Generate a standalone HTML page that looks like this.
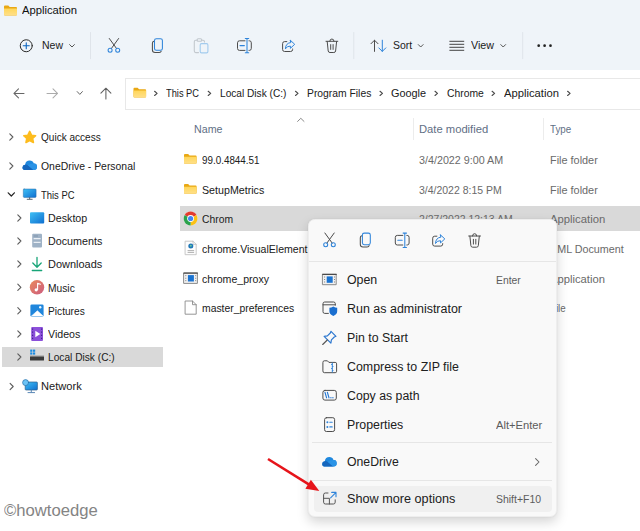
<!DOCTYPE html>
<html><head><meta charset="utf-8"><title>Application</title>
<style>
*{box-sizing:border-box;margin:0;padding:0}
html,body{width:640px;height:531px;overflow:hidden;background:#fff}
body{font-family:"Liberation Sans",sans-serif;position:relative}
.abs{position:absolute}
.t{position:absolute;white-space:nowrap;line-height:20px;height:20px;transform-origin:0 50%}
#top{left:0;top:0;width:640px;height:69.5px;background:#eff4f9}
#addr{left:125px;top:77.5px;width:520px;height:32px;border:1px solid #e8e8e8;background:#fff}
#sel{left:180px;top:206px;width:460px;height:25px;background:#d9d9d9}
#navsel{left:2px;top:347px;width:161px;height:19.5px;background:#d9d9d9}
.csep{position:absolute;top:117.5px;width:1px;height:22.5px;background:#ececec}
#menu{left:308px;top:218.5px;width:249.2px;height:298px;background:#f9f9f9;border:1px solid #eeeeee;border-radius:6.5px;box-shadow:0 5px 12px rgba(0,0,0,.17),0 0 2px rgba(0,0,0,.07)}
.msep{position:absolute;height:1px;background:#e6e6e6}
#hl{left:313.6px;top:486.3px;width:238.4px;height:25.5px;background:#f0f0f0;border-radius:4px}
</style></head><body>
<div id="top" class="abs"></div>
<div id="addr" class="abs"></div>
<div id="navsel" class="abs"></div>
<div id="sel" class="abs"></div>
<div class="csep" style="left:413px"></div><div class="csep" style="left:543px"></div>
<svg class="abs" style="left:0;top:0" width="640" height="531" viewBox="0 0 640 531" fill="none" stroke-linecap="round" stroke-linejoin="round">
<defs>
<linearGradient id="gfold" x1="0" y1="0" x2="0" y2="1"><stop offset="0" stop-color="#ffd659"/><stop offset="1" stop-color="#ffe08a"/></linearGradient>
<symbol id="fold" viewBox="0 0 13 10" overflow="visible">
 <path d="M0 1a1 1 0 0 1 1-1h3.3l1.4 1.5H12a1 1 0 0 1 1 1V9a1 1 0 0 1-1 1H1a1 1 0 0 1-1-1z" fill="#e9a814"/>
 <path d="M0 2.9h13V9a1 1 0 0 1-1 1H1a1 1 0 0 1-1-1z" fill="url(#gfold)"/>
</symbol>
<linearGradient id="gblue" x1="0" y1="0" x2="1" y2="1"><stop offset="0" stop-color="#3fc0f5"/><stop offset="1" stop-color="#0f6fd0"/></linearGradient>
<linearGradient id="gmus" x1="0" y1="0" x2="1" y2="1"><stop offset="0" stop-color="#ea8a5c"/><stop offset="1" stop-color="#cc5c80"/></linearGradient>
<g id="scis">
 <path d="M109.3 38.5L116.6 48.6M118.6 38.5L111.3 48.6" stroke="#4a4a4a" stroke-width="1"/>
 <circle cx="110.1" cy="50.2" r="2" stroke="#2f84da" stroke-width="1.05"/><circle cx="117.7" cy="50.2" r="2" stroke="#2f84da" stroke-width="1.05"/>
</g>
<g id="copy">
 <path d="M154 41.3Q152.4 41.5 152.4 43.3V49.8Q152.4 52.5 155.1 52.5H159.2Q160.9 52.5 161.2 51.2" stroke="#4d4d4d" stroke-width="1.05"/>
 <rect x="154.5" y="38.7" width="7.9" height="11.6" rx="1.9" stroke="#2f84da" stroke-width="1.05"/>
</g>
<g id="ren">
 <path d="M245 40.8H239.5Q237.5 40.8 237.5 42.8V48.4Q237.5 50.4 239.5 50.4H245M249 40.8H249.4Q251.3 40.8 251.3 42.8V48.4Q251.3 50.4 249.4 50.4H249" stroke="#4d4d4d" stroke-width="1"/>
 <path d="M245.3 38.5H248.7M245.3 52.8H248.7M247 38.5V52.8M240 45.6H244.4" stroke="#2f84da" stroke-width="1.05"/>
</g>
<g id="share">
 <path d="M286.8 41.6H284.6Q282.6 41.6 282.6 43.6V49.5Q282.6 51.5 284.6 51.5H290.6Q292.6 51.5 292.6 49.5V49" stroke="#4d4d4d" stroke-width="1"/>
 <path d="M290.4 40.3L294.7 44.3L290.4 48.3V46.1Q287 45.9 285.4 48.9Q285.6 43.2 290.4 42.6Z" stroke="#2f84da" stroke-width="1"/>
</g>
<g id="del" stroke="#4d4d4d" stroke-width="1">
 <path d="M326 41.3H337.8M329.8 41.3Q329.8 39 331.9 39Q334 39 334 41.3"/>
 <path d="M327.2 41.5L328.2 51Q328.4 52.5 330 52.5H333.8Q335.4 52.5 335.6 51L336.6 41.5"/>
 <path d="M330.7 44.6V49.4M333.1 44.6V49.4"/>
</g>
<g id="appico">
 <rect x="0.5" y="0.5" width="13.4" height="10.4" fill="#f1f1f1" stroke="#8a8a8a" stroke-width="1"/>
 <path d="M0 0.6H14.4" stroke="#4a4a4a" stroke-width="1.2" stroke-linecap="butt"/>
 <rect x="4.4" y="2.6" width="6" height="6.4" fill="#1a73d1" stroke="none"/>
 <path d="M2.3 2.8V3.6M2.3 5.3V6.1M2.3 7.8V8.6M12.2 2.8V3.6M12.2 5.3V6.1M12.2 7.8V8.6" stroke="#666" stroke-width="1" stroke-linecap="butt"/>
</g>
<g id="cloud" stroke="none">
 <path d="M3.2 9.5Q0 9.5 0 6.8Q0 4.4 2.6 4.1Q3.2 0 7.2 0Q10.2 0 11.3 2.8Q14.5 2.6 14.5 6.2Q14.5 9.5 11.3 9.5Z" fill="#1f88de"/>
 <path d="M3.2 9.5Q0 9.5 0 6.8Q0 4.4 2.6 4.1Q4 3.6 5.4 4.6L11 9.5Z" fill="#1566bd"/>
 <path d="M5.4 4.6Q7.5 2.6 11.3 2.8Q14.5 2.6 14.5 6.2Q14.5 9.5 11.3 9.5H11Z" fill="#2a93e6"/>
</g>
</defs>
<!-- title folder -->
<use href="#fold" x="4" y="5.5" width="13" height="10"/>
<!-- New -->
<circle cx="26.25" cy="45.75" r="6" stroke="#2b2b2b" stroke-width="1"/>
<path d="M23.2 45.75H29.3M26.25 42.7V48.8" stroke="#0a64c0" stroke-width="1.1"/>
<path d="M69.6 44.6L72 47L74.4 44.6" stroke="#555" stroke-width="1"/>
<path d="M90.5 32.5V58.7M353.8 32.5V58.7M522.7 32.5V58.7" stroke="#dfe4ea" stroke-width="1"/>
<use href="#scis"/><use href="#copy"/>
<!-- paste disabled -->
<g stroke="#c2c8ce" stroke-width="1.1"><path d="M197 40.2H195.8Q194.3 40.2 194.3 41.7V51Q194.3 52.6 195.8 52.6H198.5M201.8 40.2H203Q204.5 40.2 204.5 41.7V42"/><rect x="197.1" y="38.7" width="4.6" height="2.6" rx="1"/></g>
<rect x="200.2" y="43.6" width="7.7" height="9.3" rx="1.3" stroke="#a3cbee" stroke-width="1.1"/>
<use href="#ren"/><use href="#share"/><use href="#del"/>
<!-- sort -->
<path d="M374.5 40.2V51.4M371 43.7L374.5 40.2L378 43.7" stroke="#4d4d4d" stroke-width="1"/>
<path d="M382.3 40.2V51.4M378.8 47.9L382.3 51.4L385.8 47.9" stroke="#2f84da" stroke-width="1"/>
<path d="M418.3 44.6L420.7 47L423.1 44.6M500.8 44.6L503.2 47L505.6 44.6" stroke="#555" stroke-width="1"/>
<path d="M449.4 41.3H464.2M449.4 44.3H464.2M449.4 47.3H464.2M449.4 50.3H464.2" stroke="#444" stroke-width="1" stroke-linecap="butt"/>
<g fill="#222" stroke="none"><circle cx="538.7" cy="45.7" r="1.35"/><circle cx="544.6" cy="45.7" r="1.35"/><circle cx="550.5" cy="45.7" r="1.35"/></g>
<!-- nav arrows -->
<path d="M14 93.4H24M18.5 88.9L14 93.4L18.5 97.9" stroke="#666" stroke-width="1.05"/>
<path d="M47 93.4H57.5M53 88.9L57.5 93.4L53 97.9" stroke="#ababab" stroke-width="1.05"/>
<path d="M77.2 91.6L79.8 94.4L82.4 91.6" stroke="#666" stroke-width="1"/>
<path d="M105.9 88.2V99M100.9 93.2L105.9 88.2L110.9 93.2" stroke="#606060" stroke-width="1.05"/>
<use href="#fold" x="133.5" y="87.7" width="12.6" height="9.8"/>
<g stroke="#4a4a4a" stroke-width="1.15"><path d="M154.6 91.3L157.1 93.4L154.6 95.5"/><path d="M208.2 91.3L210.7 93.4L208.2 95.5"/><path d="M295.5 91.3L298.0 93.4L295.5 95.5"/><path d="M380.0 91.3L382.5 93.4L380.0 95.5"/><path d="M435.0 91.3L437.5 93.4L435.0 95.5"/><path d="M492.1 91.3L494.6 93.4L492.1 95.5"/><path d="M567.6 91.3L570.1 93.4L567.6 95.5"/></g>
<path d="M297.6 121.4L300.8 118.3L304 121.4" stroke="#8a8a8a" stroke-width="1"/>
<!-- nav chevrons -->
<g stroke="#5c5c5c" stroke-width="1.1">
<path d="M9.8 133.9L12.9 137.0L9.8 140.1"/><path d="M9.8 162.9L12.9 166.0L9.8 169.1"/>
<path d="M8.2 192.8L11.3 196L14.4 192.8" stroke="#222" stroke-width="1.2"/>
<path d="M17.8 214.9L20.9 218.0L17.8 221.1"/><path d="M17.8 237.9L20.9 241.0L17.8 244.1"/><path d="M17.8 260.9L20.9 264.0L17.8 267.1"/><path d="M17.8 284.2L20.9 287.3L17.8 290.4"/><path d="M17.8 307.7L20.9 310.8L17.8 313.9"/><path d="M17.8 330.9L20.9 334.0L17.8 337.1"/><path d="M17.8 353.9L20.9 357.0L17.8 360.1"/>
<path d="M10.1 383.4L13.2 386.5L10.1 389.6"/>
</g>
<!-- star -->
<path d="M29.7 131.4L31.5 135.2L35.6 135.7L32.6 138.5L33.4 142.5L29.7 140.5L26 142.5L26.8 138.5L23.8 135.7L27.9 135.2Z" fill="#fdbc1e" stroke="#fdbc1e" stroke-width="1.6"/>
<!-- onedrive -->
<use href="#cloud" x="22.5" y="160.6"/>
<!-- this pc -->
<rect x="23.3" y="189" width="12.8" height="8.4" rx=".8" fill="url(#gblue)" stroke="#2a6ca8" stroke-width=".5"/>
<path d="M29.7 197.6V198.8M27.2 199.3H32.2" stroke="#4a5560" stroke-width=".9"/>
<!-- desktop -->
<rect x="30" y="212.2" width="14.2" height="11.2" rx="1" fill="url(#gblue)"/>
<!-- documents -->
<rect x="32.2" y="233.8" width="9.8" height="13.6" rx="1" fill="#9fb2c6"/>
<path d="M33.6 238.7H40.6M33.6 242.3H40.6" stroke="#e9eef4" stroke-width="1.3" stroke-linecap="butt"/>
<path d="M33.6 236H38" stroke="#7e93ab" stroke-width="1" stroke-linecap="butt"/>
<!-- downloads -->
<path d="M37 257.3V267M32.8 263L37 267.2L41.2 263M32.3 270.5H41.7" stroke="#18a578" stroke-width="1.3"/>
<!-- music -->
<circle cx="37" cy="287.3" r="7.2" fill="url(#gmus)"/>
<path d="M37.6 283.2V289.6M37.6 283.2L40.4 284.2" stroke="#fff" stroke-width="1.1"/><circle cx="36.2" cy="289.8" r="1.6" fill="#fff"/>
<!-- pictures -->
<rect x="30.4" y="304.4" width="13.2" height="12.3" rx="1.4" fill="#1f86dc"/>
<path d="M31.6 315.9L37.4 310.8L43 315.9Z" fill="#fff" stroke="#fff" stroke-width=".6"/><circle cx="40.2" cy="307.3" r="1.2" fill="#e8f4ff"/>
<!-- videos -->
<rect x="31.2" y="327" width="11.8" height="14" rx="1" fill="#8c50da"/>
<path d="M35.3 330.7L40.3 334L35.3 337.3Z" fill="#fff"/>
<path d="M32.6 328.5V329.7M32.6 331.6V332.8M32.6 334.7V335.9M32.6 337.8V339M41.6 328.5V329.7M41.6 331.6V332.8M41.6 334.7V335.9M41.6 337.8V339" stroke="#3f2390" stroke-width="1.1" stroke-linecap="butt"/>
<!-- local disk -->
<g fill="#1a8ae0"><rect x="30.2" y="349.6" width="2.2" height="2.2"/><rect x="33" y="349.6" width="2.2" height="2.2"/><rect x="30.2" y="352.4" width="2.2" height="2.2"/><rect x="33" y="352.4" width="2.2" height="2.2"/></g>
<rect x="30" y="356" width="14" height="4.5" rx=".6" fill="#3b3b3b"/><rect x="30" y="355.6" width="14" height="1.2" fill="#8a8a8a"/>
<!-- network -->
<rect x="25.2" y="382" width="12.2" height="8" rx=".8" fill="url(#gblue)" stroke="#2d5f8d" stroke-width=".7"/>
<path d="M31.3 390.2V392.2M28 392.6H34.6" stroke="#5a87b5" stroke-width="1"/>
<circle cx="25.6" cy="382.6" r="3" fill="#6cc3f5" stroke="#2a6ea8" stroke-width=".7"/>
<!-- file icons -->
<use href="#fold" x="184" y="153.8" width="12.6" height="10"/>
<use href="#fold" x="184" y="183.8" width="12.6" height="10"/>
<!-- chrome -->
<g transform="translate(190.6 218.5) scale(1.03)" stroke="none">
 <circle r="6.7" fill="#fff"/>
 <path d="M0 0L-5.8 -3.35A6.7 6.7 0 0 1 5.8 -3.35Z" fill="#e33b2e"/>
 <path d="M0 0L5.8 -3.35A6.7 6.7 0 0 1 0 6.7Z" fill="#fbc116"/>
 <path d="M0 0L0 6.7A6.7 6.7 0 0 1 -5.8 -3.35Z" fill="#2ba24c"/>
 <circle r="3.3" fill="#fff"/><circle r="2.5" fill="#4285f4"/>
</g>
<!-- xml doc -->
<path d="M185.5 241.2H193L196.2 244.4V254.7H185.5Z" fill="#fdfdfd" stroke="#c2c2c2" stroke-width=".9"/>
<path d="M193 241.2V244.4H196.2" stroke="#c2c2c2" stroke-width=".8"/>
<circle cx="190.8" cy="246.1" r="2.5" fill="#1f77b8"/><path d="M189.7 245.3Q190.8 244.1 191.9 245.5Q191.6 246.9 190.4 246.7Z" fill="#6fc79a"/>
<path d="M187.6 250.6H194.1M187.6 252.4H194.1" stroke="#9a9a9a" stroke-width=".8" stroke-linecap="butt"/>
<!-- proxy -->
<use href="#appico" x="183.5" y="272.5"/>
<!-- blank file -->
<path d="M185.5 301H192.5L196.2 304.7V314.2H185.5Z" fill="#fff" stroke="#8a8a8a" stroke-width=".9"/>
<path d="M192.5 301V304.7H196.2" stroke="#8a8a8a" stroke-width=".9"/>
</svg>

<div class="t" style="left:21.50px;top:0.13px;font-size:11.5px;color:#111;transform:scaleX(0.9775)">Application</div>
<div class="t" style="left:42.00px;top:35.13px;font-size:11.5px;color:#202020;transform:scaleX(0.9124)">New</div>
<div class="t" style="left:392.80px;top:35.23px;font-size:11.5px;color:#202020;transform:scaleX(0.9102)">Sort</div>
<div class="t" style="left:471.20px;top:35.23px;font-size:11.5px;color:#202020;transform:scaleX(0.9305)">View</div>
<div class="t" style="left:166.40px;top:82.63px;font-size:11.5px;color:#202020;transform:scaleX(0.8067)">This PC</div>
<div class="t" style="left:219.60px;top:82.63px;font-size:11.5px;color:#202020;transform:scaleX(0.8806)">Local Disk (C:)</div>
<div class="t" style="left:306.60px;top:82.63px;font-size:11.5px;color:#202020;transform:scaleX(0.8983)">Program Files</div>
<div class="t" style="left:391.10px;top:82.63px;font-size:11.5px;color:#202020;transform:scaleX(0.9463)">Google</div>
<div class="t" style="left:446.80px;top:82.63px;font-size:11.5px;color:#202020;transform:scaleX(0.8996)">Chrome</div>
<div class="t" style="left:504.20px;top:82.63px;font-size:11.5px;color:#202020;transform:scaleX(0.9775)">Application</div>
<div class="t" style="left:40.75px;top:127.13px;font-size:11.5px;color:#202020;transform:scaleX(0.8737)">Quick access</div>
<div class="t" style="left:40.75px;top:156.13px;font-size:11.5px;color:#202020;transform:scaleX(0.9046)">OneDrive - Personal</div>
<div class="t" style="left:40.75px;top:185.13px;font-size:11.5px;color:#202020;transform:scaleX(0.8189)">This PC</div>
<div class="t" style="left:48.25px;top:208.13px;font-size:11.5px;color:#202020;transform:scaleX(0.9304)">Desktop</div>
<div class="t" style="left:48.25px;top:231.13px;font-size:11.5px;color:#202020;transform:scaleX(0.9326)">Documents</div>
<div class="t" style="left:48.25px;top:254.13px;font-size:11.5px;color:#202020;transform:scaleX(0.9533)">Downloads</div>
<div class="t" style="left:48.25px;top:277.63px;font-size:11.5px;color:#202020;transform:scaleX(0.8907)">Music</div>
<div class="t" style="left:48.25px;top:301.13px;font-size:11.5px;color:#202020;transform:scaleX(0.8845)">Pictures</div>
<div class="t" style="left:48.25px;top:324.13px;font-size:11.5px;color:#202020;transform:scaleX(0.9223)">Videos</div>
<div class="t" style="left:48.25px;top:347.13px;font-size:11.5px;color:#202020;transform:scaleX(0.8852)">Local Disk (C:)</div>
<div class="t" style="left:40.75px;top:376.13px;font-size:11.5px;color:#202020;transform:scaleX(0.9659)">Network</div>
<div class="t" style="left:194.00px;top:119.13px;font-size:11.5px;color:#5f6f85;transform:scaleX(0.9287)">Name</div>
<div class="t" style="left:419.00px;top:119.13px;font-size:11.5px;color:#5f6f85;transform:scaleX(0.9751)">Date modified</div>
<div class="t" style="left:549.50px;top:119.13px;font-size:11.5px;color:#5f6f85;transform:scaleX(0.8501)">Type</div>
<div class="t" style="left:202.00px;top:150.03px;font-size:11.5px;color:#202020;transform:scaleX(0.8562)">99.0.4844.51</div>
<div class="t" style="left:202.00px;top:180.03px;font-size:11.5px;color:#202020;transform:scaleX(0.9276)">SetupMetrics</div>
<div class="t" style="left:202.00px;top:209.03px;font-size:11.5px;color:#202020;transform:scaleX(0.8981)">Chrom</div>
<div class="t" style="left:202.00px;top:239.03px;font-size:11.5px;color:#202020;transform:scaleX(0.9186)">chrome.VisualElement</div>
<div class="t" style="left:202.00px;top:269.03px;font-size:11.5px;color:#202020;transform:scaleX(0.9194)">chrome_proxy</div>
<div class="t" style="left:202.00px;top:298.03px;font-size:11.5px;color:#202020;transform:scaleX(0.9019)">master_preferences</div>
<div class="t" style="left:419.00px;top:150.13px;font-size:11.5px;color:#6a6a6a;transform:scaleX(0.9339)">3/4/2022 9:00 AM</div>
<div class="t" style="left:419.00px;top:180.13px;font-size:11.5px;color:#6a6a6a;transform:scaleX(0.9108)">3/4/2022 8:15 PM</div>
<div class="t" style="left:418.50px;top:209.03px;font-size:11.5px;color:#6a6a6a;transform:scaleX(0.9101)">2/27/2022 12:13 AM</div>
<div class="t" style="left:549.50px;top:150.13px;font-size:11.5px;color:#6a6a6a;transform:scaleX(0.9465)">File folder</div>
<div class="t" style="left:549.50px;top:180.13px;font-size:11.5px;color:#6a6a6a;transform:scaleX(0.9465)">File folder</div>
<div class="t" style="left:549.50px;top:209.03px;font-size:11.5px;color:#6a6a6a;transform:scaleX(0.9811)">Application</div>
<div class="t" style="left:549.50px;top:239.03px;font-size:11.5px;color:#6a6a6a;transform:scaleX(0.9362)">XML Document</div>
<div class="t" style="left:549.50px;top:269.03px;font-size:11.5px;color:#6a6a6a;transform:scaleX(0.9775)">Application</div>
<div class="t" style="left:549.50px;top:298.03px;font-size:11.5px;color:#6a6a6a;transform:scaleX(0.8472)">File</div>
<div class="t" style="left:4.10px;top:500.39px;font-size:16.5px;color:#848484;transform:scaleX(1.0096)">©howtoedge</div>
<div id="menu" class="abs"></div>
<div class="msep" style="left:309px;width:247px;top:261px"></div>
<div class="msep" style="left:312.4px;width:239.6px;top:442px"></div>
<div class="msep" style="left:312.4px;width:239.6px;top:479.7px"></div>
<div id="hl" class="abs"></div>
<svg class="abs" style="left:0;top:0" width="640" height="531" viewBox="0 0 640 531" fill="none" stroke-linecap="round" stroke-linejoin="round">
<use href="#scis" transform="translate(215.6 194.5)"/>
<use href="#copy" transform="translate(207.9 194.4)"/>
<use href="#ren" transform="translate(157.8 194.6)"/>
<use href="#share" transform="translate(150.1 194.6)"/>
<use href="#del" transform="translate(142.7 194.7)"/>
<!-- open -->
<use href="#appico" x="322.3" y="273.8"/>
<!-- run as admin -->
<path d="M328.4 313.4H324.7Q323 313.4 323 311.7V303.7Q323 302 324.7 302H333.6Q335.3 302 335.3 303.7V305.2M323 304.8H335.2" stroke="#4d4d4d" stroke-width="1"/>
<path d="M333.3 306.6Q335.3 307.8 337.2 307.8V311.2Q337.2 314.3 333.3 315.9Q329.4 314.3 329.4 311.2V307.8Q331.3 307.8 333.3 306.6Z" fill="#1a6fd0" stroke="none"/>
<!-- pin -->
<path d="M331 331.3L336 336.3L334.3 337L331.4 339.9L330.9 343.2L324.1 336.4L327.4 335.9L330.3 333Z" stroke="#2a76cf" stroke-width="1.15"/>
<path d="M327.3 340L322.7 344.5" stroke="#555" stroke-width="1.1"/>
<!-- zip -->
<path d="M322.9 362.2Q322.9 360.8 324.3 360.8H327.4L328.9 362.4H335.2Q336.6 362.4 336.6 363.8V371.3Q336.6 372.7 335.2 372.7H324.3Q322.9 372.7 322.9 371.3Z" stroke="#4d4d4d" stroke-width="1"/>
<path d="M332.3 362.6V372.5M331.2 364.5H332.3M332.3 366.5H333.4M331.2 368.5H332.3M332.3 370.5H333.4" stroke="#2f84da" stroke-width="1" stroke-linecap="butt"/>
<!-- copy as path -->
<rect x="322.9" y="390.4" width="13.4" height="9.7" rx="2" stroke="#4d4d4d" stroke-width="1"/>
<path d="M325 392.4L326.6 397.8M327.4 392.4L329 397.8" stroke="#2477d3" stroke-width="1.15"/>
<path d="M330.6 397.7H331.2M332.6 397.7H333.2" stroke="#2477d3" stroke-width="1.1"/>
<!-- properties -->
<rect x="324.6" y="417.7" width="10" height="13.8" rx="1.8" stroke="#4d4d4d" stroke-width="1"/>
<circle cx="327.4" cy="422.2" r="1" fill="#2f84da"/><circle cx="327.4" cy="426.9" r="1" fill="#2f84da"/>
<path d="M329.8 422.2H332.2M329.8 426.9H332.2" stroke="#2f84da" stroke-width="1.1"/>
<!-- onedrive -->
<use href="#cloud" x="322.2" y="457.1"/>
<path d="M535.6 458.6L539 462L535.6 465.4" stroke="#666" stroke-width="1.05"/>
<!-- show more -->
<path d="M328 493H325.4Q323.6 493 323.6 494.8V502.2Q323.6 504 325.4 504H333.4Q335.2 504 335.2 502.2V499.8M323.6 498.3H329.4V504" stroke="#555" stroke-width="1"/>
<path d="M330.6 497.8L335.8 492.6M331.7 492.4H336V496.7" stroke="#2f84da" stroke-width="1.1"/>
<!-- red arrow -->
<path d="M268 459L310.4 485.4" stroke="#e6141a" stroke-width="2.6" stroke-linecap="butt"/>
<path d="M319.3 490.9L305.4 488.8L310.9 479.8Z" fill="#e6141a" stroke="none"/>
</svg>

<div class="t" style="left:347.25px;top:270.14px;font-size:12.5px;color:#202020;transform:scaleX(0.9888)">Open</div>
<div class="t" style="left:347.25px;top:299.14px;font-size:12.5px;color:#202020;transform:scaleX(0.9972)">Run as administrator</div>
<div class="t" style="left:347.25px;top:328.14px;font-size:12.5px;color:#202020;transform:scaleX(0.9864)">Pin to Start</div>
<div class="t" style="left:347.25px;top:357.14px;font-size:12.5px;color:#202020;transform:scaleX(0.9906)">Compress to ZIP file</div>
<div class="t" style="left:347.25px;top:386.14px;font-size:12.5px;color:#202020;transform:scaleX(0.9848)">Copy as path</div>
<div class="t" style="left:347.25px;top:415.14px;font-size:12.5px;color:#202020;transform:scaleX(0.9871)">Properties</div>
<div class="t" style="left:347.25px;top:452.14px;font-size:12.5px;color:#202020;transform:scaleX(0.9802)">OneDrive</div>
<div class="t" style="left:347.20px;top:489.14px;font-size:12.5px;color:#202020;transform:scaleX(1.0129)">Show more options</div>
<div class="t" style="left:496.00px;top:270.13px;font-size:11.5px;color:#5c5c5c;transform:scaleX(0.9000)">Enter</div>
<div class="t" style="left:495.60px;top:415.13px;font-size:11.5px;color:#5c5c5c;transform:scaleX(0.9722)">Alt+Enter</div>
<div class="t" style="left:495.60px;top:489.13px;font-size:11.5px;color:#5c5c5c;transform:scaleX(0.9082)">Shift+F10</div>
</body></html>
